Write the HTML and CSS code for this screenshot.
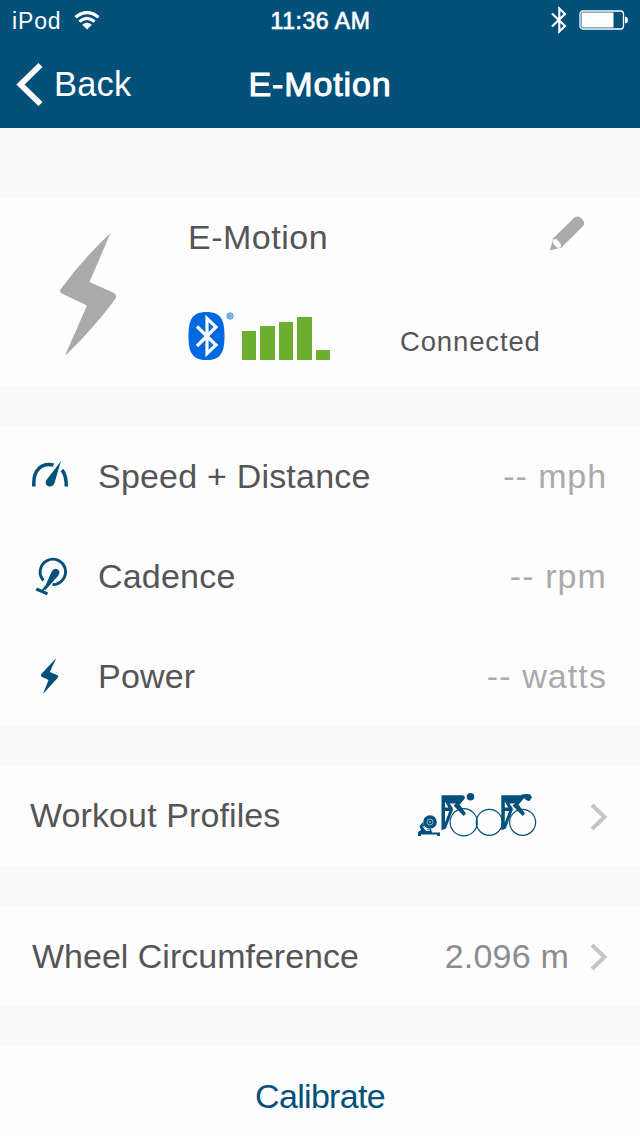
FILE: index.html
```
<!DOCTYPE html>
<html lang="en">
<head>
<meta charset="utf-8">
<title>E-Motion</title>
<link rel="stylesheet" href="styles.css">
</head>
<body>
<div class="screen">
  <header class="header">
    <div class="status">
      <div class="status-left"><span class="carrier">iPod</span>
        <svg class="wifi" width="26" height="19" viewBox="0 0 26 19"><g fill="none" stroke="#fff" stroke-width="3.2"><path d="M1.5 6.2Q13-3.2 24.5 6.2"/><path d="M5.4 10.6Q13 4.2 20.6 10.6"/></g><path d="M8.2 13.7Q13 9.8 17.8 13.7L13 18.5Z" fill="#fff"/></svg>
      </div>
      <span class="clock">11:36 AM</span>
      <div class="status-right">
        <svg width="16" height="28" viewBox="0 0 16 28"><path d="M1 7.5L14 20L8.300 25.500V2.500L14 8L1 20.500" fill="none" stroke="#fff" stroke-width="2.100"/></svg>
        <svg width="50" height="20" viewBox="0 0 50 20"><rect x="1" y="1" width="43.5" height="18" rx="3" fill="none" stroke="#fff" stroke-width="1.300"/><path d="M2.500 2.500H34.500V17.500H2.500Z" fill="#fff"/><path d="M46 6.500Q49 7 49 10T46 13.500Z" fill="#fff"/></svg>
      </div>
    </div>
    <nav class="nav">
      <div class="back"><svg width="28" height="44" viewBox="0 0 28 44"><path d="M24.500 3L4.500 22.500L24.500 42" fill="none" stroke="#fff" stroke-width="5.800"/></svg><span class="back-text">Back</span></div>
      <h1 class="title">E-Motion</h1>
    </nav>
  </header>

  <section class="device card">
    <svg class="device-bolt" width="60" height="126" viewBox="0 0 60 126"><path d="M51.500 1L30.500 50L54 60.500Q59.500 63 55.500 68Q34 97 7 123Q6 123 8 119L28 73.500L4 62Q-1 60 2.500 56Q24 27 51.500 1Z" fill="#aaa"/></svg>
    <div class="device-info">
      <div class="device-top"><span class="device-name">E-Motion</span>
        <svg width="36" height="36" viewBox="0 0 36 36"><path d="M0 34.500L3 22.500L24.500 1.500Q28.500-1.500 32.500 3.500Q36 7.500 32.500 10.500L11.500 31.500Z" fill="#aaa"/><ellipse cx="6.800" cy="27.500" rx="2.900" ry="5" transform="rotate(-42 6.800 27.500)" fill="#fdfdfd"/></svg>
      </div>
      <div class="device-bottom">
        <svg class="bt" width="46" height="50" viewBox="0 0 46 50"><path d="M18.500 0C33 0 36.500 8 36.500 24S33 48 18.500 48S.500 40 .500 24S4 0 18.500 0Z" fill="#0069df"/><path d="M9 14.500L28 33L19 41.500V6.500L28 15L9 34" fill="none" stroke="#fff" stroke-width="3.200"/><circle cx="42" cy="4" r="3.200" fill="#a9cdf2" stroke="#4c98e5"/><path d="M40.800 6V2.500H42.500Q44 3.500 42.500 4.200H41M42.300 4L43.500 6" fill="none" stroke="#4c98e5" stroke-width=".8"/></svg>
        <div class="signal"><i class="bar b1"></i><i class="bar b2"></i><i class="bar b3"></i><i class="bar b4"></i><i class="bar b5"></i></div>
        <span class="state">Connected</span>
      </div>
    </div>
  </section>

  <section class="card">
    <div class="row">
      <svg class="row-icon" width="38" height="30" viewBox="0 0 38 30"><g fill="none" stroke="#03507b" stroke-width="3.500"><path d="M2.800 26.500V23C2.800 9.500 11 2.300 22.500 5"/><path d="M31 10Q35.300 15 35.300 26.500"/></g><path d="M30 1L23.500 23Q21.500 27.500 17.500 26.300Q13 24.500 15.500 20Z" fill="#03507b"/></svg>
      <span class="label l-speed">Speed + Distance</span><span class="value v-mph">-- mph</span>
    </div>
    <div class="row">
      <svg class="row-icon cadence" width="38" height="40" viewBox="0 0 38 40"><path d="M11.500 24.500A12.700 12.700 0 1 1 20.500 28.600" fill="none" stroke="#03507b" stroke-width="2.900"/><path d="M12 33L19.500 16Q22 11 26 13.500Q29 16.500 25.500 20.500L13.500 34Z" fill="#03507b"/><path d="M4.300 33L15.500 37.800" fill="none" stroke="#03507b" stroke-width="3"/><path d="M10 35.500L14 30" stroke="#03507b" stroke-width="2"/></svg>
      <span class="label l-cadence">Cadence</span><span class="value v-rpm">-- rpm</span>
    </div>
    <div class="row">
      <svg class="row-icon power" width="38" height="38" viewBox="0 0 38 38"><path d="M25.300 2L18.800 16L26.500 19.200Q28 20 26.500 22L12 38L17.500 24L10.300 20.500Q9.300 19.800 10.300 18Z" fill="#03507b"/></svg>
      <span class="label l-power">Power</span><span class="value v-watts">-- watts</span>
    </div>
  </section>

  <section class="card row profiles">
    <span class="label l-workout">Workout Profiles</span>
    <svg class="riders" width="120" height="46" viewBox="0 0 120 46">
      <g fill="none" stroke="#03507b" stroke-width="1.200"><circle cx="45.700" cy="29.300" r="13.600"/><circle cx="71.300" cy="29.300" r="13"/><circle cx="104.600" cy="29.300" r="13"/></g>
      <path d="M23.500 2.300H43.500Q48 2.500 46.500 6L41.500 11.500L48 20.500L45.700 23L35.500 12.500L38 10.500H31.500L34.500 14.500Q35.500 16 34.500 18L28 35.500L23.500 37.300ZM27 8.500V14.500H30.500ZM27 18V29.500L31.300 18Z" fill="#03507b" fill-rule="evenodd"/>
      <circle cx="52.500" cy="3.800" r="3.800" fill="#03507b"/>
      <path d="M83.300 2.300H102.500Q107 2.500 105.500 6L100.500 11.500L107 20.500L104.700 23L94.500 12.500L97 10.500H91.300L94.300 14.500Q95.300 16 94.300 18L87.800 35.500L83.300 37.300ZM86.800 8.500V14.500H90.300ZM86.800 18V29.500L91.100 18Z" fill="#03507b" fill-rule="evenodd"/>
      <path d="M102.500 2Q107 .500 112 1.300L114 4.500L111.500 8Q108 8 106 5Z" fill="#03507b"/>
      <circle cx="12" cy="29" r="6.800" fill="#03507b"/><circle cx="12" cy="29" r="3" fill="none" stroke="#8fb2c5" stroke-width="1"/><circle cx="12" cy="29" r="1" fill="#8fb2c5"/>
      <path d="M5 29L1.500 33L3 37L0 39V43H3V41.500H19V43H22V39.500H14L13 36L7 37Z" fill="#03507b"/><path d="M4.500 33L8 37.500H12" fill="none" stroke="#fdfdfd" stroke-width=".8"/>
    </svg>
    <svg class="chevron" width="18" height="28" viewBox="0 0 18 28"><path d="M2 2L14.500 14L2 26" fill="none" stroke="#c5c5c8" stroke-width="4"/></svg>
  </section>

  <section class="card row wheel">
    <span class="label l-wheel">Wheel Circumference</span>
    <span class="wheel-value">2.096 m</span>
    <svg class="chevron" width="18" height="28" viewBox="0 0 18 28"><path d="M2 2L14.500 14L2 26" fill="none" stroke="#c5c5c8" stroke-width="4"/></svg>
  </section>

  <section class="card calibrate"><span class="calibrate-text">Calibrate</span></section>
</div>
</body>
</html>
```
FILE: styles.css
```
* { box-sizing: border-box; }
body { margin: 0; background: #fafafa; font-family: "Liberation Sans", Arial, sans-serif; color: #555557; }
svg { display: block; flex: none; }
.screen { width: 640px; height: 1136px; overflow: hidden; display: flex; flex-direction: column; gap: 40px; background: #fafafa; }
.header { height: 128px; flex: none; margin-bottom: 30px; background: #03507b; color: #fff; }
.status { height: 40px; display: grid; grid-template-columns: 1fr auto 1fr; align-items: center; padding: 2px 11px 0 12px; }
.status-left { display: flex; align-items: center; gap: 13px; }
.carrier { font-size: 23px; letter-spacing: .85px; }
.wifi { margin-top: -2px; }
.clock { font-size: 23px; letter-spacing: .55px; -webkit-text-stroke: .7px #fff; }
.status-right { display: flex; justify-content: flex-end; align-items: center; gap: 12px; margin-top: -2px; }
.nav { height: 88px; display: grid; grid-template-columns: 1fr auto 1fr; align-items: center; padding: 0 16px; }
.back { display: flex; align-items: center; gap: 8px; }
.back-text { font-size: 34.500px; letter-spacing: .2px; margin-left: 2px; margin-top: 1px; }
.title { margin: 1px 0 0; font-size: 34px; font-weight: 400; letter-spacing: .9px; -webkit-text-stroke: 1px #fff; }
.card { flex: none; background: #fdfdfd; }
.device { height: 188px; display: flex; padding: 0 54px 0 59px; }
.device-bolt { margin-top: 34px; }
.device-info { flex: 1; padding-left: 67px; }
.device-top { height: 78px; display: flex; justify-content: space-between; align-items: center; }
.device-top svg { margin-top: -6px; }
.device-name { font-size: 34px; letter-spacing: .5px; margin-left: 2px; margin-top: 1px; }
.device-bottom { display: flex; align-items: flex-start; margin-top: 36px; margin-left: 2px; }
.signal { height: 48px; display: flex; align-items: flex-end; gap: 4px; margin-left: 8px; }
.bar { display: block; background: #6dad2f; }
.b1 { width: 14px; height: 29px; } .b2 { width: 15px; height: 34px; } .b3 { width: 14px; height: 38px; } .b4 { width: 15px; height: 43px; } .b5 { width: 14px; height: 10px; }
.state { font-size: 27.500px; letter-spacing: .85px; margin: 14px 0 0 70px; white-space: nowrap; }
.row { height: 100px; display: flex; align-items: center; padding: 2px 33px 0 31px; white-space: nowrap; }
.row-icon { margin-right: 29px; margin-top: -4px; }
.cadence { margin-left: 1px; margin-right: 28px; margin-top: -2px; }
.label, .value, .wheel-value { font-size: 34px; margin-top: -1px; }
.l-speed { letter-spacing: .2px; }
.l-cadence, .l-power { letter-spacing: .2px; }
.l-workout { letter-spacing: .1px; margin-top: -3px; }
.l-wheel { letter-spacing: 0; }
.value { margin-left: auto; color: #aaaaac; letter-spacing: 1.1px; }
.v-mph { letter-spacing: .9px; }
.profiles { padding-left: 30px; }
.riders { margin-left: auto; margin-right: 52px; margin-top: -3px; }
.chevron { margin-right: -1px; }
.wheel { padding-left: 32px; }
.wheel-value { color: #8c8c90; margin-left: auto; margin-right: 21px; letter-spacing: .2px; }
.calibrate { height: 90px; display: flex; justify-content: center; align-items: center; padding-top: 11px; }
.calibrate-text { color: #03507b; font-size: 34px; letter-spacing: -.7px; }
```
